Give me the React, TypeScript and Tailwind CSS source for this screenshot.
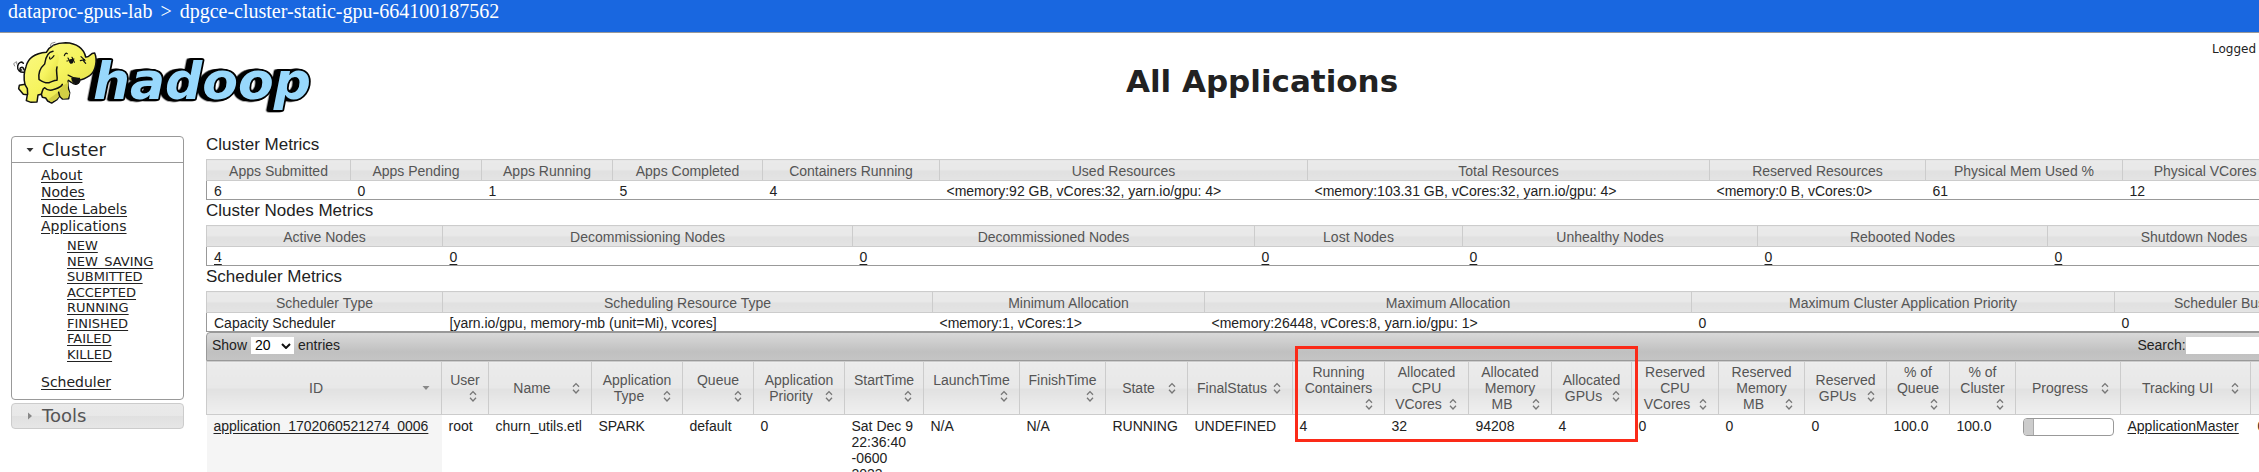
import type { ReactNode } from 'react';

const headCell =
  'border border-[#ccc] px-[7px] text-center font-normal text-[#555]';
const smallHead =
  'h-[21px] bg-[linear-gradient(#eaeaea_0%,#e8e8e8_50%,#e0e0e0_50%,#e4e4e4_100%)] pt-[2px] leading-[16px] whitespace-nowrap';
const tallHead =
  'bg-[linear-gradient(#ebebeb_0%,#e8e8e8_50%,#e1e1e1_50%,#f0f0f0_100%)] py-[2px] leading-[16px] align-middle';
const link = 'underline underline-offset-2';

type Column = { label: string; value: ReactNode; width?: number };

const zero = (
  <a href="#nodes" className={link}>
    0
  </a>
);

const clusterMetrics: Column[] = [
  { label: 'Apps Submitted', value: '6', width: 144 },
  { label: 'Apps Pending', value: '0', width: 131 },
  { label: 'Apps Running', value: '1', width: 131 },
  { label: 'Apps Completed', value: '5', width: 150 },
  { label: 'Containers Running', value: '4', width: 177 },
  { label: 'Used Resources', value: '<memory:92 GB, vCores:32, yarn.io/gpu: 4>', width: 368 },
  { label: 'Total Resources', value: '<memory:103.31 GB, vCores:32, yarn.io/gpu: 4>', width: 402 },
  { label: 'Reserved Resources', value: '<memory:0 B, vCores:0>', width: 216 },
  { label: 'Physical Mem Used %', value: '61', width: 197 },
  { label: 'Physical VCores Used %', value: '12' },
];

const nodeMetrics: Column[] = [
  {
    label: 'Active Nodes',
    value: (
      <a href="#nodes" className={link}>
        4
      </a>
    ),
    width: 236,
  },
  { label: 'Decommissioning Nodes', value: zero, width: 410 },
  { label: 'Decommissioned Nodes', value: zero, width: 402 },
  { label: 'Lost Nodes', value: zero, width: 208 },
  { label: 'Unhealthy Nodes', value: zero, width: 295 },
  { label: 'Rebooted Nodes', value: zero, width: 290 },
  { label: 'Shutdown Nodes', value: zero },
];

const schedulerMetrics: Column[] = [
  { label: 'Scheduler Type', value: 'Capacity Scheduler', width: 236 },
  {
    label: 'Scheduling Resource Type',
    value: '[yarn.io/gpu, memory-mb (unit=Mi), vcores]',
    width: 490,
  },
  { label: 'Minimum Allocation', value: '<memory:1, vCores:1>', width: 272 },
  { label: 'Maximum Allocation', value: '<memory:26448, vCores:8, yarn.io/gpu: 1>', width: 487 },
  { label: 'Maximum Cluster Application Priority', value: '0', width: 423 },
  { label: 'Scheduler Busyness', value: '0' },
];

const appColumns: Column[] = [
  {
    label: 'ID',
    value: (
      <a href="#app" className={link}>
        application_1702060521274_0006
      </a>
    ),
    width: 235,
  },
  { label: 'User', value: 'root', width: 47 },
  { label: 'Name', value: 'churn_utils.etl', width: 103 },
  { label: 'Application Type', value: 'SPARK', width: 91 },
  { label: 'Queue', value: 'default', width: 71 },
  { label: 'Application Priority', value: '0', width: 91 },
  { label: 'StartTime', value: 'Sat Dec 9 22:36:40 -0600 2023', width: 79 },
  { label: 'LaunchTime', value: 'N/A', width: 96 },
  { label: 'FinishTime', value: 'N/A', width: 86 },
  { label: 'State', value: 'RUNNING', width: 82 },
  { label: 'FinalStatus', value: 'UNDEFINED', width: 105 },
  { label: 'Running Containers', value: '4', width: 92 },
  { label: 'Allocated CPU VCores', value: '32', width: 84 },
  { label: 'Allocated Memory MB', value: '94208', width: 83 },
  { label: 'Allocated GPUs', value: '4', width: 80 },
  { label: 'Reserved CPU VCores', value: '0', width: 87 },
  { label: 'Reserved Memory MB', value: '0', width: 86 },
  { label: 'Reserved GPUs', value: '0', width: 82 },
  { label: '% of Queue', value: '100.0', width: 63 },
  { label: '% of Cluster', value: '100.0', width: 66 },
  {
    label: 'Progress',
    value: (
      <div className="h-[18px] overflow-hidden rounded-[4px] border border-[#999] bg-white">
        <div className="h-full w-[10px] border-r border-[#aaa] bg-[#ccc]" />
      </div>
    ),
    width: 105,
  },
  {
    label: 'Tracking UI',
    value: (
      <a href="#tracking" className={link}>
        ApplicationMaster
      </a>
    ),
    width: 130,
  },
  { label: 'Blacklisted Nodes', value: '0' },
];

const states = [
  'NEW',
  'NEW_SAVING',
  'SUBMITTED',
  'ACCEPTED',
  'RUNNING',
  'FINISHED',
  'FAILED',
  'KILLED',
];

function Columns({ columns }: { columns: Column[] }) {
  return (
    <colgroup>
      {columns.map((c) => (
        <col key={c.label} style={c.width ? { width: c.width } : undefined} />
      ))}
    </colgroup>
  );
}

function MetricsTable({ title, columns, wide }: { title: string; columns: Column[]; wide?: boolean }) {
  return (
    <section>
      <h2 className="h-[25px] pt-[1px] text-[17px] leading-[20px]">{title}</h2>
      <table
        className={`table-fixed border-collapse border border-[#999] text-[14px] ${wide ? 'w-[105%]' : 'w-[104%]'}`}
      >
        <Columns columns={columns} />
        <thead>
          <tr>
            {columns.map((c) => (
              <th key={c.label} className={`${headCell} ${smallHead}`}>
                {c.label}
              </th>
            ))}
          </tr>
        </thead>
        <tbody>
          <tr>
            {columns.map((c) => (
              <td key={c.label} className="px-[7px] pt-[2px] leading-[16px] whitespace-nowrap">
                {c.value}
              </td>
            ))}
          </tr>
        </tbody>
      </table>
    </section>
  );
}

function SortIcon({ active }: { active: boolean }) {
  return (
    <svg viewBox="0 0 16 16" className="float-right size-4" fill="none" aria-hidden="true">
      {active ? (
        <path d="M4.5 6h7L8 10z" fill="#888" />
      ) : (
        <path d="M5 6.8 8 3.6l3 3.2M5 9.8 8 13l3-3.2" stroke="#777" strokeWidth="1.3" />
      )}
    </svg>
  );
}

function Logo() {
  return (
    <svg viewBox="30 24 912 228" className="h-[76px] w-[304px]" role="img" aria-label="hadoop">
      <defs>
        <linearGradient id="hide" x1="0" y1="0" x2="1" y2="1">
          <stop offset="0" stopColor="#fbfa8a" />
          <stop offset="0.5" stopColor="#f6f45f" />
          <stop offset="1" stopColor="#dcd83f" />
        </linearGradient>
      </defs>
      <text
        x="279"
        y="206"
        fontSize="156"
        fill="#98d8fc"
        stroke="#000"
        strokeWidth="11"
        strokeLinejoin="round"
        className="font-['DejaVu_Sans',sans-serif] font-bold italic [filter:drop-shadow(-3px_0_0_#000)_drop-shadow(-6px_0_0_#000)_drop-shadow(-7px_1px_0_#000)] [paint-order:stroke]"
      >
        hadoop
      </text>
      <g stroke="#111" strokeWidth="4.5" strokeLinecap="round" strokeLinejoin="round" fill="url(#hide)">
        <path d="M77 124C69 122 73 112 66 112C58 113 58 121 65 120M76 126C60 130 51 119 53 108C55 97 66 93 70 100" fill="none" />
        <path d="M78 110C84 84 106 70 139 67C149 47 172 38 197 38C230 39 252 56 257 81C269 84 270 68 284 69C292 88 289 123 269 137C258 144 249 149 240 150C238 163 224 167 214 157L205 151C202 164 204 175 209 188L206 206L187 207L178 198L171 209L155 219L143 213L137 204L127 202L124 193L114 195L111 216L93 217L79 212L82 194L70 193L56 176L58 166L75 163C70 143 71 128 78 110Z" />
        <path d="M188 166C199 163 203 157 206 153L203 176L209 190L204 204L190 206L180 197L170 208L154 217L144 209C158 197 177 190 188 166Z" fill="#d3cf45" stroke="none" />
        <path d="M75 164L82 176L83 193M124 193C128 183 126 177 134 173C142 181 151 183 162 178C174 174 183 172 187 163M176 187L179 199" fill="none" />
        <path d="M172 67C153 62 137 76 134 102C119 115 115 133 117 148C126 154 136 161 147 158C157 155 166 149 171 151C174 139 166 126 171 111C176 96 180 81 172 67Z" stroke="none" />
        <path d="M159 64C145 66 137 80 134 102C119 115 115 133 117 148C126 154 136 161 147 158C157 155 166 149 171 151C174 139 166 126 171 111" fill="none" />
        <path d="M149 81C147 91 155 88 162 77M193 77C195 70 198 68 202 71M201 93L222 87M204 84L212 99M216 82L223 97" fill="none" strokeWidth="3.5" />
        <path d="M208 93C212 83 222 86 219 99C215 104 207 101 208 93Z" fill="#111" stroke="none" />
        <path d="M243 80L255 91M241 92L254 89M251 93L257 100M204 135C214 142 224 146 239 145" fill="none" strokeWidth="3.5" />
        <path d="M216 145L238 147L234 160C225 163 217 157 216 145Z" fill="#111" />
        <path d="M151 47L154 40L165 37M157 49L160 46M44 108L41 101L49 95M50 102L50 97" fill="none" stroke="#777" strokeWidth="2.5" />
      </g>
    </svg>
  );
}

function Sidebar() {
  return (
    <nav className="ml-[11px] flex w-[173px] shrink-0 flex-col gap-[3px] pt-[8px] font-['DejaVu_Sans',sans-serif]">
      <div className="rounded-[4px] border border-[#999]">
        <h3 className="border-b border-[#999]">
          <button type="button" className="flex h-[25px] w-full items-center text-[18px] leading-[24px]">
            <svg viewBox="0 0 8 8" className="mr-[8px] ml-[14px] size-2" aria-hidden="true">
              <path d="M0.5 2h7L4 6z" fill="#333" />
            </svg>
            Cluster
          </button>
        </h3>
        <ul className="pt-[4px] pb-[8px] pl-[29px] text-[14px] leading-[17px]">
          {['About', 'Nodes', 'Node Labels', 'Applications'].map((t) => (
            <li key={t}>
              <a href="#page" className={link}>
                {t}
              </a>
            </li>
          ))}
          <li>
            <ul className="grid min-h-[127px] auto-rows-fr pt-[3px] pl-[26px] text-[13px] leading-[15px]">
              {states.map((t) => (
                <li key={t}>
                  <a href="#state" className={link}>
                    {t}
                  </a>
                </li>
              ))}
            </ul>
          </li>
          <li className="pt-[12px]">
            <a href="#scheduler" className={link}>
              Scheduler
            </a>
          </li>
        </ul>
      </div>
      <h3>
        <button
          type="button"
          className="flex h-[26px] w-full items-center rounded-[4px] border border-[#ccc] bg-[linear-gradient(#eaeaea_0%,#e8e8e8_50%,#e0e0e0_50%,#e6e6e6_100%)] text-[18px] leading-[24px] text-[#555]"
        >
          <svg viewBox="0 0 8 8" className="mr-[8px] ml-[14px] size-2" aria-hidden="true">
            <path d="M2 0.5v7L6 4z" fill="#888" />
          </svg>
          Tools
        </button>
      </h3>
    </nav>
  );
}

function Applications() {
  return (
    <section className="relative">
      <div className="flex h-[29px] w-[105%] items-center rounded-t-[4px] border border-[#999] bg-[linear-gradient(#d9d9d9,#c0c0c0_70%,#c4c4c4)] px-[5px] pb-[2px] text-[14px]">
        <label htmlFor="entries">Show</label>
        <span className="relative mx-[4px]">
          <select
            id="entries"
            defaultValue="20"
            className="block h-[17px] w-[43px] appearance-none bg-white pl-[4px] text-[14px] leading-[17px] text-black"
          >
            <option>20</option>
            <option>40</option>
          </select>
          <svg viewBox="0 0 10 6" className="pointer-events-none absolute top-[6px] right-[3px] h-[6px] w-[10px]" fill="none" aria-hidden="true">
            <path d="M1 1l4 4 4-4" stroke="#111" strokeWidth="2" />
          </svg>
        </span>
        entries
        <label htmlFor="search" className="ml-auto">
          Search:
        </label>
        <input id="search" type="text" className="h-[17px] w-[170px] bg-white" />
      </div>
      <table className="w-[105%] table-fixed border-collapse text-[14px]">
        <Columns columns={appColumns} />
        <thead>
          <tr>
            {appColumns.map((c, i) => (
              <th key={c.label} className={`${headCell} ${tallHead}`}>
                {c.label} <SortIcon active={i === 0} />
              </th>
            ))}
          </tr>
        </thead>
        <tbody>
          <tr>
            {appColumns.map((c, i) => (
              <td
                key={c.label}
                className={`px-[7px] py-[3px] align-top leading-[16px] ${i === 0 ? 'bg-[#f5f5f5]' : ''}`}
              >
                {c.value}
              </td>
            ))}
          </tr>
        </tbody>
      </table>
      <div className="pointer-events-none absolute top-[14px] left-[1089px] h-[96px] w-[343px] border-[3px] border-[#fb2a18]" />
    </section>
  );
}

export default function App() {
  return (
    <div className="h-screen overflow-hidden bg-white font-['Liberation_Sans',Arial,sans-serif] text-[#222]">
      <div className="h-[33px] border-b border-[#999] bg-[#1967e0] pl-[8px] font-['Liberation_Serif',serif] text-[20px] leading-[22px] whitespace-pre text-white">
        dataproc-gpus-lab <span className="mx-[3px]">{'>'}</span> dpgce-cluster-static-gpu-664100187562
      </div>
      <header className="flex h-[95px] items-start font-['DejaVu_Sans',sans-serif]">
        <div className="w-[314px] shrink-0 pt-[5px] pl-[10px]">
          <Logo />
        </div>
        <h1 className="flex-1 pt-[30px] pr-[2px] text-center text-[31px] leading-[36px] font-bold">All Applications</h1>
        <div className="w-[47px] shrink-0 pt-[8px] text-[12px] leading-[16px]">Logged</div>
      </header>
      <div className="flex items-start">
        <Sidebar />
        <main className="ml-[22px] min-w-0 flex-1 pt-[6px]">
          <MetricsTable title="Cluster Metrics" columns={clusterMetrics} />
          <MetricsTable title="Cluster Nodes Metrics" columns={nodeMetrics} />
          <MetricsTable title="Scheduler Metrics" columns={schedulerMetrics} wide />
          <Applications />
        </main>
      </div>
    </div>
  );
}
